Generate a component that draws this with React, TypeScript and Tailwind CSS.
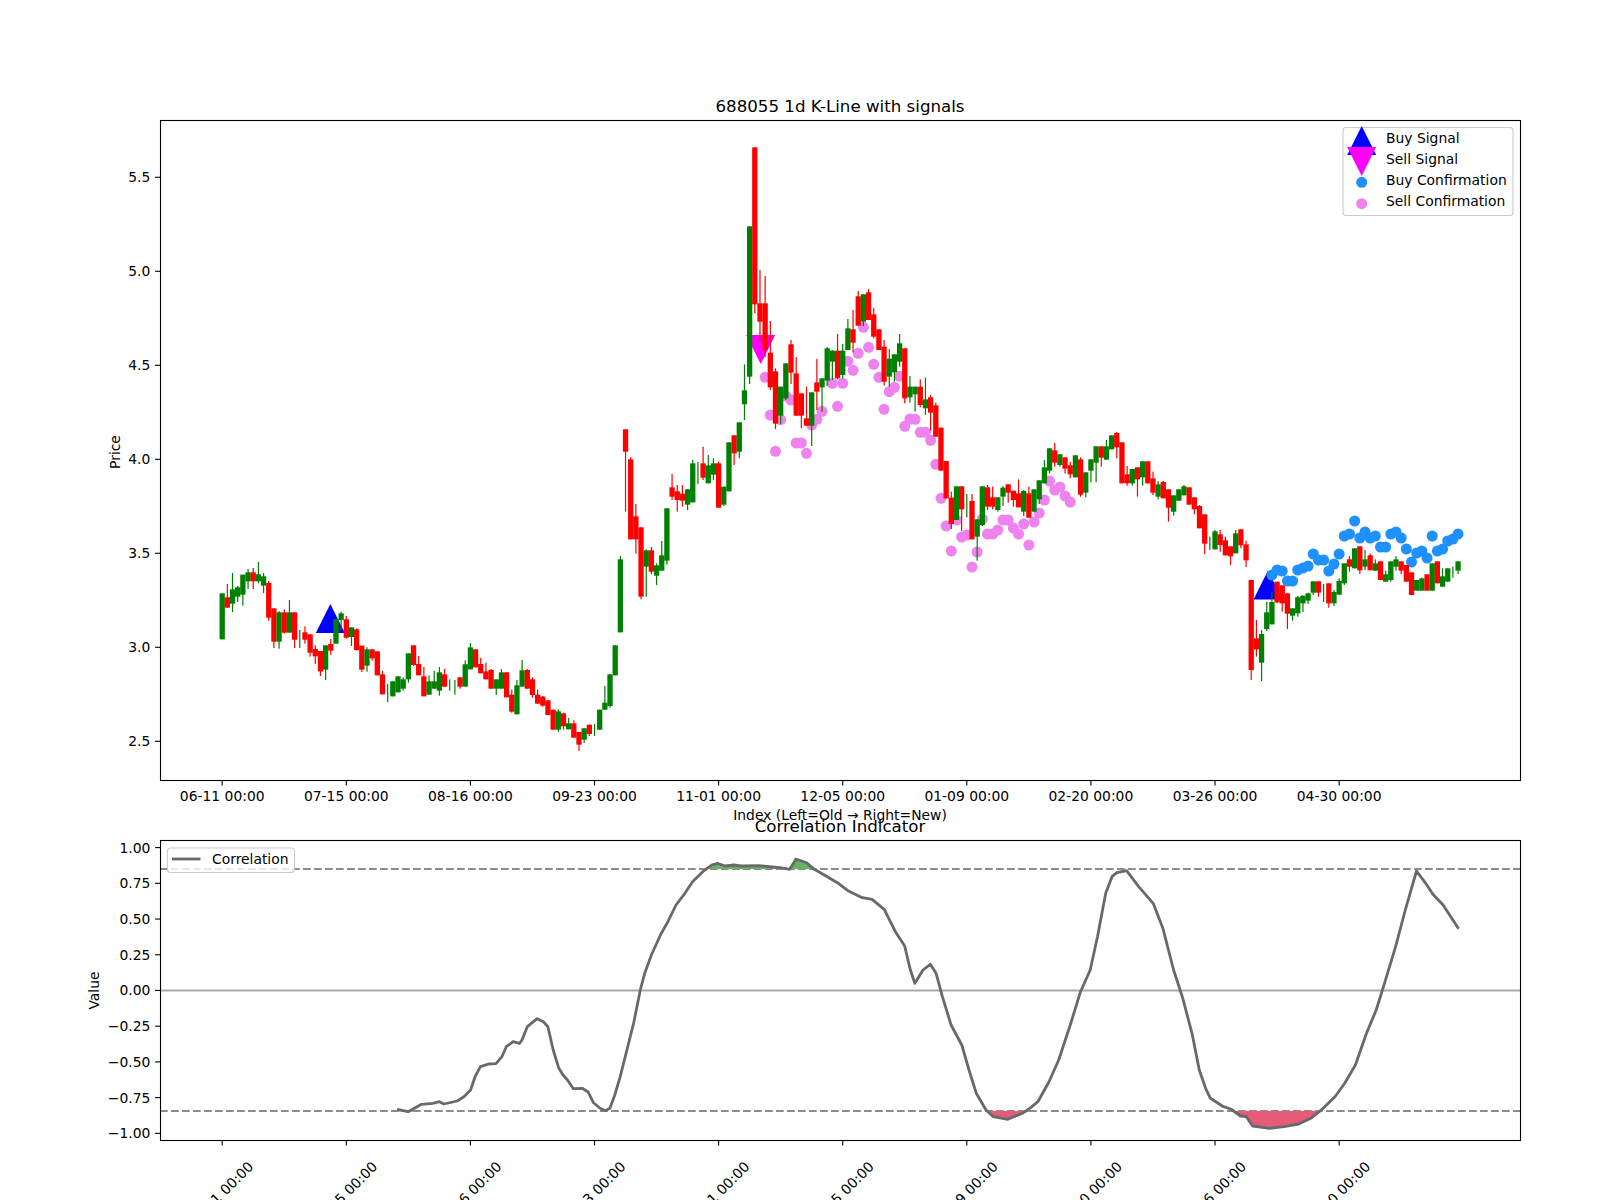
const FIG_W = 1600;
const BAR_X0 = 222.2;
const BAR_STEP = 5.171;

// x position of the i-th trading day, shared by both panels
const barX = (i: number) => BAR_X0 + BAR_STEP * i;

// [green?, body top, body bottom, wick top, wick bottom], y in 1/3 px below y=400
const candles: number[][] = [
  [1,580,718,580,718],[0,592,623,552,623],[1,568,611,519,636],[1,562,590,558,606],[1,524,584,524,617],
  [1,517,544,507,567],[0,517,544,504,567],[1,523,544,486,550],[1,529,557,519,579],[0,549,653,543,662],
  [0,625,725,625,744],[1,637,725,633,746],[0,637,698,628,701],[1,637,698,600,698],[0,637,719,637,744],
  [1,0,0,690,744],[0,697,719,679,731],[0,703,758,703,770],[0,747,769,735,792],[0,753,814,753,828],
  [1,736,809,736,840],[0,732,752,717,765],[1,658,731,658,731],[1,640,660,635,690],[0,658,713,648,716],
  [1,682,711,682,738],[0,688,750,685,752],[0,737,809,737,816],[1,748,797,742,815],[0,748,775,748,782],
  [0,754,826,754,826],[0,823,883,813,883],[1,0,0,852,906],[1,844,889,844,889],[1,829,877,829,877],
  [1,838,866,832,872],[1,760,838,760,848],[0,736,795,736,798],[0,792,826,768,826],[0,829,889,801,889],
  [1,844,884,826,884],[1,844,866,812,866],[1,817,872,801,887],[0,823,860,806,860],[1,0,0,838,872],
  [1,0,0,840,884],[0,832,860,832,866],[1,793,860,781,860],[1,742,808,729,808],[0,748,802,748,802],
  [0,792,820,773,820],[0,814,838,788,838],[0,810,866,807,866],[1,838,866,838,885],[1,817,866,807,866],
  [0,817,892,817,892],[0,884,935,869,938],[1,856,943,840,943],[1,811,860,780,860],[0,810,866,807,866],
  [0,838,885,832,893],[0,884,911,869,911],[0,890,917,888,920],[0,901,945,901,945],[0,929,989,929,989],
  [1,934,989,928,995],[0,940,979,938,989],[1,970,988,954,988],[0,970,1013,961,1013],[0,996,1034,996,1053],
  [1,985,1019,985,1029],[0,974,1002,974,1008],[1,0,0,972,1008],[1,929,989,929,989],[1,908,929,858,929],
  [1,823,918,823,923],[1,736,826,736,826],[1,478,697,468,697],[0,88,155,88,335],[0,178,418,172,418],
  [0,349,418,312,461],[0,382,590,382,598],[1,451,500,448,590],[0,451,515,441,523],[1,496,527,490,555],
  [1,466,512,423,512],[1,325,482,325,494],[0,262,290,222,300],[0,274,300,255,335],[0,281,302,255,320],
  [1,268,314,268,330],[1,190,307,180,307],[1,0,0,186,252],[0,190,233,140,240],[1,196,250,165,250],
  [1,190,224,175,240],[0,190,323,185,323],[1,260,314,260,318],[1,127,274,127,274],[0,106,160,106,195],
  [1,67,155,67,175],[1,-29,13,-107,60],[1,-521,-70,-521,-48],[0,-758,-287,-758,-260],[0,-290,-235,-390,-175],
  [0,-290,-150,-372,-128],[0,-142,-38,-237,-30],[0,-86,71,-95,87],[1,-40,47,-40,72],[1,-110,-5,-110,0],
  [0,-167,-82,-180,-48],[0,-80,47,-129,47],[0,-20,47,-20,85],[0,55,77,-40,77],[1,-23,77,-23,138],
  [0,-53,-25,-123,30],[1,-65,-38,-65,35],[1,-155,-58,-159,-42],[1,-148,-115,-150,-60],[0,-148,-65,-198,-62],
  [1,-148,-75,-168,-65],[1,-215,-150,-243,-150],[0,-212,-172,-270,-143],[0,-311,-223,-327,-223],[1,-317,-235,-317,-222],
  [0,-323,-240,-333,-240],[0,-257,-190,-276,-185],[0,-212,-150,-212,-150],[0,-160,-55,-180,-43],[1,-124,-70,-153,-40],
  [1,-137,-83,-137,-55],[1,-170,-115,-198,-100],[0,-155,-5,-155,10],[1,-40,-8,-72,8],[1,-40,-17,-40,35],
  [0,-40,15,-62,22],[1,-2,25,-67,45],[0,-8,38,-15,92],[0,16,110,8,110],[0,83,212,83,212],
  [0,183,295,183,295],[0,293,372,275,387],[1,259,360,259,360],[0,259,328,259,393],[1,0,0,282,352],
  [0,303,418,282,418],[1,358,410,358,482],[1,259,375,259,378],[0,262,320,255,330],[0,292,320,260,328],
  [1,292,330,292,335],[1,263,290,258,318],[0,253,278,253,308],[0,272,300,272,320],[0,280,322,238,322],
  [1,273,335,270,348],[0,280,353,260,353],[1,268,335,268,335],[1,241,298,241,312],[1,202,250,180,250],
  [1,145,212,145,220],[0,151,188,129,200],[1,163,195,163,200],[0,172,206,172,220],[0,196,223,185,235],
  [1,166,232,166,232],[0,178,284,172,290],[1,217,278,217,292],[1,178,212,178,247],[1,139,188,139,247],
  [0,139,173,139,200],[1,139,179,120,179],[1,106,148,106,148],[0,99,142,96,175],[0,127,250,127,250],
  [0,223,250,198,257],[1,207,250,207,257],[0,202,238,202,290],[1,184,232,184,257],[0,184,250,184,250],
  [0,235,278,215,285],[1,253,290,243,298],[0,246,295,243,295],[0,268,323,268,365],[1,286,335,286,347],
  [1,268,302,268,302],[1,259,286,255,286],[0,262,314,262,314],[0,292,328,292,343],[0,318,385,315,385],
  [0,343,431,343,462],[1,0,0,410,450],[1,394,448,390,448],[0,403,435,390,455],[0,421,466,410,466],
  [0,439,469,439,495],[1,400,460,390,460],[0,388,436,388,445],[0,433,481,422,501],[0,540,810,540,840],
  [0,715,748,660,770],[1,702,788,690,843],[1,637,687,605,693],[1,606,673,576,673],[0,545,607,545,610],
  [0,556,610,556,635],[0,580,641,580,687],[1,625,647,625,662],[1,592,640,588,650],[1,587,610,587,636],
  [1,580,602,578,612],[1,544,578,544,585],[0,544,578,544,590],[1,0,0,552,606],[0,550,610,550,623],
  [1,576,610,570,618],[1,543,584,535,584],[1,490,550,490,555],[0,478,500,468,515],[1,445,505,445,505],
  [0,439,511,439,522],[1,478,500,450,510],[0,466,511,460,511],[1,490,512,478,512],[0,484,540,484,540],
  [1,523,545,512,545],[1,484,540,484,545],[1,478,500,468,512],[0,484,512,484,522],[0,495,545,495,545],
  [0,517,585,517,585],[1,540,572,540,572],[1,535,572,533,572],[0,523,572,523,572],[1,490,572,490,572],
  [0,484,550,484,550],[1,529,560,505,560],[1,505,545,505,545],[1,0,0,500,533],[1,484,512,484,522],
];

// confirmation dots: y by bar index, starting at the given bar
const sellStart = 105;
const sellDots = [
  377.3,415,451.3,419.7,396,400,443,443,453.3,425,419.3,411.3,null,383.3,406.3,383.3,361.3,370.3,353.3,327.3,
  347.3,364.3,377.3,409.3,391.7,387.3,376.3,426.3,419,419.3,432.3,432.3,440.3,464.3,498.3,526,551,520,537,535,
  567,552,519,534,534,530,520,520,528,534,524,545,522,513,500,481,490,487,496,502,
];
const buyStart = 203;
const buyDots = [
  575,570,571,581,581,570,568,566,554,560,560,571,564,554,536,534,521,538,532,538,
  536,547,547,534,532,538,549,562,553,551,558,536,551,549,541,539,534,
];

const curve: [number, number][] = [
  [397,1109.3],[408.1,1111.7],[421.5,1104.3],[432.7,1103.3],[439.4,1101.7],[443.8,1104],[457.2,1101],[463.9,1096.7],
  [470.6,1090],[475.1,1076.7],[480.4,1066.7],[488.5,1064],[496,1063.7],[501.9,1056.7],[506.3,1046.7],[513,1041.7],
  [519.7,1043.3],[522,1040],[527.3,1026.7],[537.1,1018.7],[543.4,1021.7],[547.9,1026.7],[553.2,1050],[558.6,1067.7],
  [563,1075],[567.5,1080],[573.3,1088.7],[582.2,1088.3],[588,1091.7],[593.4,1102.7],[600.1,1108.3],[605.4,1110.7],
  [609.9,1108.3],[614.8,1095],[620.2,1076.7],[626.9,1050],[633.6,1023.3],[640.3,990],[644.7,973.3],[651.4,955],
  [660.4,935],[667,923.3],[676,905],[684.9,893.3],[692.5,881.7],[702.8,871.7],[711.7,865],[717.5,863.3],
  [725.1,866],[734,865],[740.7,866],[758.6,865.7],[780,867.7],[789.7,869.3],[796,859],[806.7,862.7],
  [813.9,869],[826,876],[838.2,883.3],[847.9,890.7],[862.4,897.7],[872.1,899.3],[884.2,909.3],[895.4,931.7],
  [904.6,945.7],[909.9,968.3],[914.8,983.3],[923,970],[930.3,964.3],[936.1,973.3],[942.4,996.7],[951.1,1025],
  [961.8,1045],[969,1070],[976.3,1093.3],[986,1110],[993.3,1116.7],[1007.8,1119.3],[1022.4,1113.3],[1031.1,1107.3],
  [1037.9,1101.7],[1049,1081.7],[1058.7,1060],[1070.8,1023.3],[1080.5,991.7],[1090.2,970],[1097.5,936.7],[1105.7,893.3],
  [1112,876.7],[1116.9,872.7],[1126.6,870.7],[1138.7,886.7],[1153.2,903.3],[1162.9,928.3],[1173.6,970],[1182.3,996.7],
  [1192,1033.3],[1199.3,1070],[1205.6,1088.3],[1210.4,1098.3],[1223.5,1106.7],[1230.8,1109],[1240.5,1116],[1246.3,1116.7],
  [1252.6,1126],[1269.6,1128.3],[1284.1,1126.7],[1298.7,1124],[1310.8,1118.3],[1320.5,1110.7],[1335,1096.7],[1344.7,1083.3],
  [1355.4,1065],[1366.5,1033.3],[1376.2,1010],[1383.5,986.7],[1395.6,946.7],[1405.3,910],[1416.5,871],[1425.7,883.3],
  [1432.9,894.3],[1443.1,905],[1458.6,928.7],
];

const dateLabels = ["06-11", "07-15", "08-16", "09-23", "11-01", "12-05", "01-09", "02-20", "03-26", "04-30"];
const priceTicks = ["2.5", "3.0", "3.5", "4.0", "4.5", "5.0", "5.5"];
const valueTicks = ["1.00", "0.75", "0.50", "0.25", "0.00", "−0.25", "−0.50", "−0.75", "−1.00"];

const UPPER_Y = 869;
const LOWER_Y = 1111;

const toPoints = (pts: [number, number][]) => pts.map(([x, y]) => `${x},${y}`).join(" ");
const curvePoints = toPoints(curve);
const upperFill = toPoints(curve.map(([x, y]) => [x, Math.min(y, UPPER_Y)] as [number, number]));
const lowerFill = toPoints(curve.map(([x, y]) => [x, Math.max(y, LOWER_Y)] as [number, number]));

const Triangle = ({ x, y, down, color }: { x: number; y: number; down?: boolean; color: string }) => (
  <polygon
    points={down ? `${x - 14.5},${y} ${x + 14.5},${y} ${x},${y + 29}` : `${x - 14.5},${y + 29} ${x + 14.5},${y + 29} ${x},${y}`}
    fill={color}
  />
);

const Axes = ({ top, bottom }: { top: number; bottom: number }) => (
  <rect x={160.5} y={top + 0.5} width={1360} height={bottom - top} fill="none" stroke="#000" strokeWidth={1.1} />
);

const PriceChart = () => (
  <svg viewBox={`0 0 ${FIG_W} 824`} className="block h-[824px] w-[1600px] overflow-visible text-[13.89px]">
    <text x={840} y={111.5} textAnchor="middle" className="text-[16.67px]">688055 1d K-Line with signals</text>
    <text transform="rotate(-90 120 452)" x={120} y={452} textAnchor="middle">Price</text>

    <Triangle x={330.3} y={604} color="#0000ff" />
    <Triangle x={1268} y={570.5} color="#0000ff" />
    <Triangle x={760.7} y={335} down color="#ff00ff" />

    {sellDots.map((y, i) =>
      y === null ? null : <circle key={i} cx={barX(sellStart + i)} cy={y} r={5.5} fill="#ee82ee" />
    )}
    {buyDots.map((y, i) => (
      <circle key={i} cx={barX(buyStart + i)} cy={y} r={5.5} fill="#1e90ff" />
    ))}

    {candles.map(([green, top, bottom, wickTop, wickBottom], i) => {
      const color = green ? "#008000" : "#ff0000";
      const x = barX(i);
      return (
        <g key={i} fill={color}>
          <rect x={x - 0.6} y={400 + wickTop / 3} width={1.2} height={(wickBottom - wickTop) / 3} />
          {bottom > top && <rect x={x - 2.65} y={400 + top / 3} width={5.3} height={(bottom - top) / 3} />}
        </g>
      );
    })}

    <Axes top={120} bottom={780} />

    {priceTicks.map((label, i) => {
      const y = 741.3 - 94 * i;
      return (
        <g key={label}>
          <line x1={155.1} x2={160} y1={y} y2={y} stroke="#000" strokeWidth={1.1} />
          <text x={150.3} y={y + 5} textAnchor="end">{label}</text>
        </g>
      );
    })}
    {dateLabels.map((label, i) => {
      const x = barX(i * 24);
      return (
        <g key={label}>
          <line x1={x} x2={x} y1={781} y2={785.4} stroke="#000" strokeWidth={1.1} />
          <text x={x} y={800.5} textAnchor="middle">{label} 00:00</text>
        </g>
      );
    })}
    <text x={840} y={820} textAnchor="middle">Index (Left=Old → Right=New)</text>

    {/* legend */}
    <rect x={1343} y={127.5} width={170} height={88} rx={3} fill="#fff" fillOpacity={0.8} stroke="#ccc" strokeWidth={1.1} />
    <Triangle x={1361.7} y={126} color="#0000ff" />
    <Triangle x={1361.7} y={147} down color="#ff00ff" />
    <circle cx={1361.7} cy={182.3} r={5.5} fill="#1e90ff" />
    <circle cx={1361.7} cy={203.7} r={5.5} fill="#ee82ee" />
    <text x={1386} y={143.3}>Buy Signal</text>
    <text x={1386} y={164.3}>Sell Signal</text>
    <text x={1386} y={185.3}>Buy Confirmation</text>
    <text x={1386} y={206.3}>Sell Confirmation</text>
  </svg>
);

const CorrelationChart = () => (
  <svg viewBox={`0 824 ${FIG_W} 376`} className="block h-[376px] w-[1600px] overflow-visible text-[13.89px]">
    <text x={840} y={831.7} textAnchor="middle" className="text-[16.67px]">Correlation Indicator</text>
    <text transform="rotate(-90 98.5 990.5)" x={98.5} y={990.5} textAnchor="middle">Value</text>

    <line x1={160} x2={1520} y1={990.5} y2={990.5} stroke="#aaa" strokeWidth={2} />
    <line x1={160} x2={1520} y1={UPPER_Y} y2={UPPER_Y} stroke="#8c8c8c" strokeWidth={2} strokeDasharray="7.7 3.3" />
    <line x1={160} x2={1520} y1={LOWER_Y} y2={LOWER_Y} stroke="#8c8c8c" strokeWidth={2} strokeDasharray="7.7 3.3" />

    <polygon points={`${curve[0][0]},${UPPER_Y} ${upperFill} ${curve[curve.length - 1][0]},${UPPER_Y}`} fill="#66b366" />
    <polygon points={`${curve[0][0]},${LOWER_Y} ${lowerFill} ${curve[curve.length - 1][0]},${LOWER_Y}`} fill="#e75b77" />
    <polyline points={curvePoints} fill="none" stroke="#696969" strokeWidth={2.8} strokeLinejoin="round" />

    <Axes top={840} bottom={1140} />

    {valueTicks.map((label, i) => {
      const y = 847.6 + 35.72 * i;
      return (
        <g key={label}>
          <line x1={155.1} x2={160} y1={y} y2={y} stroke="#000" strokeWidth={1.1} />
          <text x={150.3} y={y + 5} textAnchor="end">{label}</text>
        </g>
      );
    })}
    {dateLabels.map((label, i) => {
      const x = barX(i * 24);
      const cy = 1194;
      return (
        <g key={label}>
          <line x1={x} x2={x} y1={1141} y2={1145.4} stroke="#000" strokeWidth={1.1} />
          <text transform={`rotate(-45 ${x - 1.5} ${cy})`} x={x - 1.5} y={cy + 5} textAnchor="middle">{label} 00:00</text>
        </g>
      );
    })}

    {/* legend */}
    <rect x={167.5} y={848} width={127} height={24.5} rx={3} fill="#fff" fillOpacity={0.8} stroke="#ccc" strokeWidth={1.1} />
    <line x1={172} x2={200.5} y1={859} y2={859} stroke="#696969" strokeWidth={2.8} />
    <text x={212} y={864}>Correlation</text>
  </svg>
);

export default function App() {
  return (
    <div className="flex h-[1200px] w-[1600px] flex-col overflow-hidden bg-white font-['DejaVu_Sans',sans-serif]">
      <PriceChart />
      <CorrelationChart />
    </div>
  );
}
